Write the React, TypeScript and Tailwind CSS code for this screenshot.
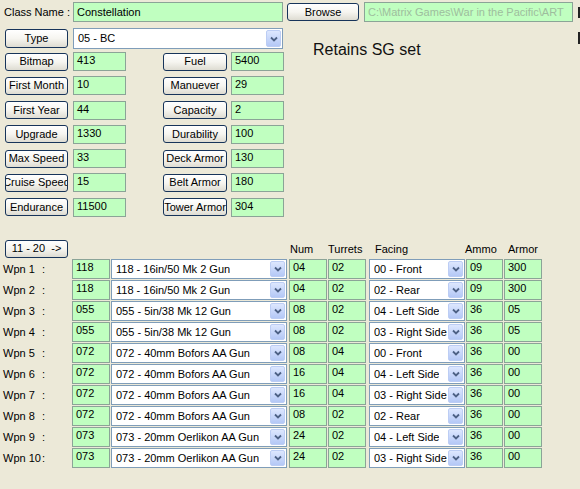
import React from 'react'

const leftStats: [string, string][] = [
  ['Bitmap', '413'],
  ['First Month', '10'],
  ['First Year', '44'],
  ['Upgrade', '1330'],
  ['Max Speed', '33'],
  ['Cruise Speed', '15'],
  ['Endurance', '11500'],
]

const rightStats: [string, string][] = [
  ['Fuel', '5400'],
  ['Manuever', '29'],
  ['Capacity', '2'],
  ['Durability', '100'],
  ['Deck Armor', '130'],
  ['Belt Armor', '180'],
  ['Tower Armor', '304'],
]

const weapons = [
  ['118', '118 - 16in/50 Mk 2 Gun', '04', '02', '00 - Front', '09', '300'],
  ['118', '118 - 16in/50 Mk 2 Gun', '04', '02', '02 - Rear', '09', '300'],
  ['055', '055 - 5in/38 Mk 12 Gun', '08', '02', '04 - Left Side', '36', '05'],
  ['055', '055 - 5in/38 Mk 12 Gun', '08', '02', '03 - Right Side', '36', '05'],
  ['072', '072 - 40mm Bofors AA Gun', '08', '04', '00 - Front', '36', '00'],
  ['072', '072 - 40mm Bofors AA Gun', '16', '04', '04 - Left Side', '36', '00'],
  ['072', '072 - 40mm Bofors AA Gun', '16', '04', '03 - Right Side', '36', '00'],
  ['072', '072 - 40mm Bofors AA Gun', '08', '02', '02 - Rear', '36', '00'],
  ['073', '073 - 20mm Oerlikon AA Gun', '24', '02', '04 - Left Side', '36', '00'],
  ['073', '073 - 20mm Oerlikon AA Gun', '24', '02', '03 - Right Side', '36', '00'],
]

const Field = ({ value, className = '' }: { value: string; className?: string }) => (
  <div className={`shrink-0 overflow-hidden whitespace-nowrap border border-[#8ba497] bg-[#c0ffc0] pl-[3px] pt-[1px] leading-[13px] ${className}`}>
    {value}
  </div>
)

const Btn = ({ label, className = '' }: { label: string; className?: string }) => (
  <button className={`flex shrink-0 items-center justify-center overflow-hidden whitespace-nowrap rounded-[3px] border border-[#17345a] bg-linear-to-b from-white via-[#f6f5f0] to-[#dedcd2] leading-none text-black ${className}`}>
    {label}
  </button>
)

const Arrow = () => (
  <span className="my-[1px] mr-[1px] ml-auto flex h-[calc(100%-2px)] w-[15px] shrink-0 items-center justify-center rounded-[2px] border border-[#bccdf4] bg-linear-to-b from-[#dde7fe] to-[#b4c8f6]">
    <svg width="8" height="6" viewBox="0 0 8 6">
      <polyline points="1,1.5 4,4.5 7,1.5" fill="none" stroke="#4d6185" strokeWidth="1.8" />
    </svg>
  </span>
)

const Combo = ({ value, className = '' }: { value: string; className?: string }) => (
  <div className={`flex shrink-0 items-center overflow-hidden whitespace-nowrap border border-[#7f9db9] bg-white pl-[4px] ${className}`}>
    <span className="overflow-hidden">{value}</span>
    <Arrow />
  </div>
)

export default function App() {
  return (
    <div className="h-[489px] w-[580px] overflow-hidden bg-[#ece9d8] pt-[2px] font-['Liberation_Sans',Arial,sans-serif] text-[11px] text-black">
      {/* class name row */}
      <div className="flex items-center">
        <span className="w-[73px] shrink-0 pl-[4px]">Class Name :</span>
        <div className="flex h-[20px] w-[210px] shrink-0 items-center border border-[#8ba497] bg-[#c0ffc0] pl-[3px]">Constellation</div>
        <Btn label="Browse" className="ml-[4px] h-[18px] w-[72px]" />
        <div className="ml-[5px] flex h-[20px] w-[209px] shrink-0 items-center overflow-hidden whitespace-nowrap border border-[#8ba497] bg-[#c0ffc0] pl-[3px] text-[#9ebd9e]">
          C:\Matrix Games\War in the Pacific\ART
        </div>
        <div className="ml-[5px] h-[11px] w-[2px] shrink-0 bg-[#222]" />
      </div>

      <div className="mt-[6px] flex">
        <div className="w-[290px] shrink-0">
          {/* type row */}
          <div className="flex items-center pl-[5px]">
            <Btn label="Type" className="h-[19px] w-[63px]" />
            <Combo value="05 - BC" className="ml-[5px] h-[21px] w-[210px]" />
          </div>

          {/* stats grid */}
          <div className="mt-[3px] flex flex-col gap-y-[5.3px] pl-[5px]">
            {leftStats.map(([label, value], i) => (
              <div key={label} className="flex items-center">
                <Btn label={label} className="h-[18px] w-[63px]" />
                <Field value={value} className="ml-[5px] h-[19px] w-[53px]" />
                <Btn label={rightStats[i][0]} className="ml-[37px] h-[18px] w-[64px]" />
                <Field value={rightStats[i][1]} className="ml-[4px] h-[19px] w-[53px]" />
              </div>
            ))}
          </div>
        </div>

        <div className="flex flex-1 justify-between">
          <span className="ml-[23px] pt-[13px] text-[16px] leading-[18px] text-[#111]">Retains SG set</span>
          <div className="mt-[4px] h-[12px] w-[2px] bg-[#222]" />
        </div>
      </div>

      {/* weapons header */}
      <div className="mt-[23px] flex items-center">
        <Btn label="11 - 20  ->" className="ml-[5px] h-[18px] w-[63px] whitespace-pre" />
        <span className="ml-[222px] w-[38px]">Num</span>
        <span className="w-[47px]">Turrets</span>
        <span className="w-[90px]">Facing</span>
        <span className="w-[43px]">Ammo</span>
        <span>Armor</span>
      </div>

      {/* weapons rows */}
      <div className="mt-[1px] flex flex-col gap-y-[1px]">
        {weapons.map((w, i) => (
          <div key={i} className="flex h-[20px] items-stretch">
            <div className="flex w-[72px] shrink-0 items-center pl-[3px]">
              <span className="w-[39px] shrink-0">Wpn {i + 1}</span>
              <span>:</span>
            </div>
            <Field value={w[0]} className="w-[38px]" />
            <Combo value={w[1]} className="ml-[1px] w-[176px]" />
            <Field value={w[2]} className="ml-[2px] w-[38px]" />
            <Field value={w[3]} className="ml-[1px] w-[38px]" />
            <Combo value={w[4]} className="ml-[3px] w-[96px]" />
            <Field value={w[5]} className="ml-[1px] w-[37px]" />
            <Field value={w[6]} className="ml-[1px] w-[38px]" />
          </div>
        ))}
      </div>
    </div>
  )
}
